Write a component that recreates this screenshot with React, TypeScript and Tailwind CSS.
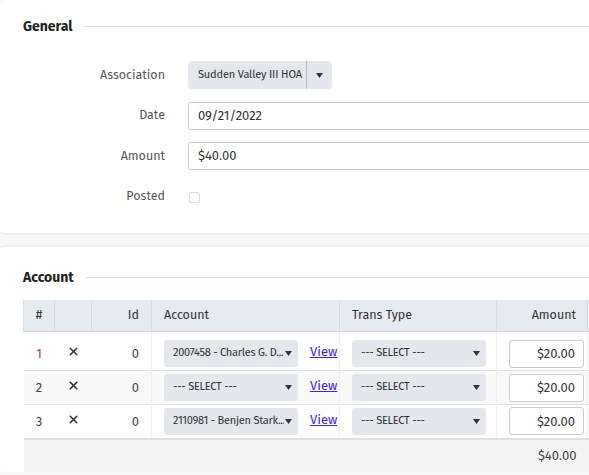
import { X } from 'lucide-react';

const font = { fontFamily: '"Fira Sans", Roboto, "Noto Sans", sans-serif' };

function Caret() {
  return (
    <svg width="7" height="5" viewBox="0 0 7 5" className="shrink-0">
      <path d="M0 0h7L3.5 5z" fill="#333" />
    </svg>
  );
}

function SectionTitle({ title }: { title: string }) {
  return (
    <div className="flex items-center gap-3">
      <h2 className="text-[14px] font-bold text-[#222]">{title}</h2>
      <div className="h-px flex-1 bg-[#d8e2f0]" />
    </div>
  );
}

function FieldRow({ label, children }: { label: string; children: React.ReactNode }) {
  return (
    <div className="flex items-center">
      <label className="w-[165px] shrink-0 pr-[23px] text-right text-[12.5px] text-[#555]">{label}</label>
      <div className="flex-1">{children}</div>
    </div>
  );
}

function CellSelect({ text }: { text: string }) {
  return (
    <div className="flex h-[27px] w-[134px] items-center justify-between gap-[1px] rounded-[3px] bg-[#e4e7ec] pl-[9px] pr-[6px] text-[11px] tracking-[-0.25px] text-[#333]">
      <span className="overflow-hidden whitespace-nowrap">{text}</span>
      <Caret />
    </div>
  );
}

const rows = [
  { n: 1, account: '2007458 - Charles G. D...', first: true },
  { n: 2, account: '--- SELECT ---', first: false },
  { n: 3, account: '2110981 - Benjen Stark...', first: false },
];

export default function App() {
  return (
    <div className="min-h-screen w-full overflow-hidden bg-[#f8f8f8]" style={font}>
      <div className="w-[700px]">
        <section className="rounded-[4px] bg-white pb-[22px] pl-[23px] pt-[16px] shadow-[0_1px_3px_rgba(0,0,0,0.08)]">
          <SectionTitle title="General" />
          <div className="mt-[24px] flex flex-col gap-[12.5px]">
            <FieldRow label="Association">
              <div className="flex h-[28px] w-[144px] items-center rounded-[4px] bg-[#e4e7ec] text-[11px] tracking-[-0.15px] text-[#333]">
                <span className="flex-1 whitespace-nowrap pl-[10px]">Sudden Valley III HOA</span>
                <span className="h-full w-px bg-[#b9bdc3]" />
                <span className="flex w-[25px] justify-center"><Caret /></span>
              </div>
            </FieldRow>
            <FieldRow label="Date">
              <div className="flex h-[28px] items-center rounded-[3px] border border-[#cccccc] px-[9px] text-[13px] text-[#333]">
                09/21/2022
              </div>
            </FieldRow>
            <FieldRow label="Amount">
              <div className="flex h-[28px] items-center rounded-[3px] border border-[#cccccc] px-[9px] text-[13px] text-[#333]">
                $40.00
              </div>
            </FieldRow>
            <FieldRow label="Posted">
              <div className="h-[28px] pl-[1px] pt-[9px]">
                <div className="h-[11px] w-[11px] rounded-[2px] border border-[#dddddd]" />
              </div>
            </FieldRow>
          </div>
        </section>

        <section className="mt-[14px] rounded-[4px] bg-white pl-[23px] pt-[20px] shadow-[0_-1px_3px_rgba(0,0,0,0.05)]">
          <SectionTitle title="Account" />
          <table className="mt-[12px] w-[640px] table-fixed border-collapse text-[13px] text-[#444]">
            <colgroup>
              <col className="w-[31px]" />
              <col className="w-[37px]" />
              <col className="w-[60px]" />
              <col className="w-[188px]" />
              <col className="w-[157px]" />
              <col className="w-[91px]" />
              <col />
            </colgroup>
            <thead>
              <tr className="h-[32px] border-b border-[#d4d8dd] bg-[#e6ebf2] text-[12.5px] text-[#333]">
                <th className="border-l border-r border-[#d8dde4] text-center font-normal">#</th>
                <th className="border-r border-[#d8dde4] font-normal" />
                <th className="border-r border-[#d8dde4] pr-[12px] text-right font-normal">Id</th>
                <th className="border-r border-[#d8dde4] pl-[12px] text-left font-normal">Account</th>
                <th className="border-r border-[#d8dde4] pl-[12px] text-left font-normal">Trans Type</th>
                <th className="border-r border-[#d8dde4] pr-[11px] text-right font-normal">Amount</th>
                <th className="font-normal" />
              </tr>
            </thead>
            <tbody>
              {rows.map((r) => (
                <tr
                  key={r.n}
                  className={`border-b border-[#e2e2e2] ${r.n === 2 ? 'bg-[#f9f9f9]' : 'bg-white'} ${r.first ? 'h-[39px]' : 'h-[34px]'}`}
                >
                  <td className={`p-0 text-center ${r.first ? 'pt-[5px] text-[#a04444]' : ''}`}>{r.n}</td>
                  <td className={`p-0 text-center ${r.first ? 'pt-[1px]' : 'pb-[4px]'}`}>
                    <X size={13} strokeWidth={2.8} className="mx-auto text-[#333]" />
                  </td>
                  <td className={`border-r border-[#f0f0f0] p-0 pr-[12px] text-right ${r.first ? 'pt-[5px]' : ''}`}>0</td>
                  <td className={`border-r border-[#f0f0f0] p-0 pl-[12px] ${r.first ? 'pt-[5px]' : ''}`}>
                    <div className="flex items-center gap-[12px]">
                      <CellSelect text={r.account} />
                      <a href="#" className="pb-[3px] text-[#3a22e8] underline">View</a>
                    </div>
                  </td>
                  <td className={`border-r border-[#f0f0f0] p-0 pl-[12px] ${r.first ? 'pt-[5px]' : ''}`}>
                    <CellSelect text="--- SELECT ---" />
                  </td>
                  <td className={`border-r border-[#f0f0f0] p-0 pr-[3px] ${r.first ? 'pt-[5px]' : ''}`}>
                    <div className="ml-auto flex h-[28px] w-[75px] items-center justify-end rounded-[3px] border border-[#cccccc] bg-white pr-[8px] text-[13px] text-[#333]">
                      $20.00
                    </div>
                  </td>
                  <td />
                </tr>
              ))}
              <tr className="h-[33px] border-t-2 border-[#e0e0e0] bg-[#f3f3f3]">
                <td colSpan={5} />
                <td className="pr-[11px] text-right text-[#444]">$40.00</td>
                <td />
              </tr>
            </tbody>
          </table>
        </section>
      </div>
    </div>
  );
}
